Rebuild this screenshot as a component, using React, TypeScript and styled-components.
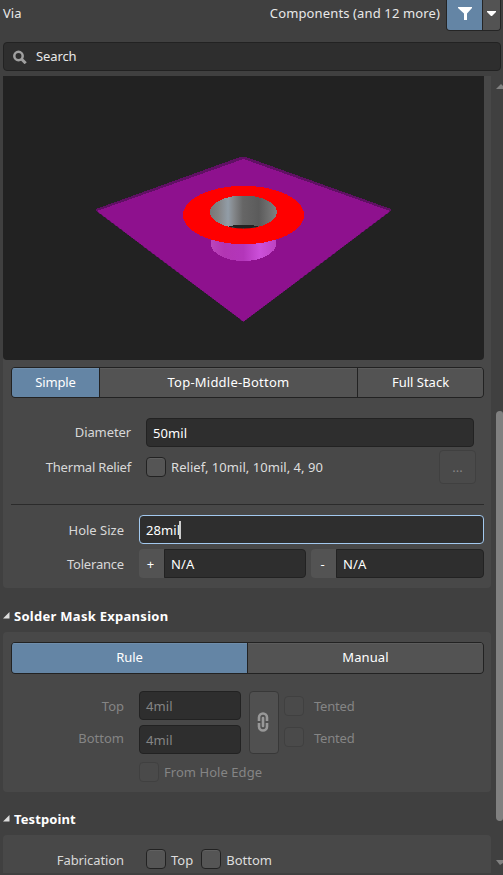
import React from "react";
import styled, { createGlobalStyle, css } from "styled-components";

const Global = createGlobalStyle`
  * { box-sizing: border-box; }
  html, body { margin: 0; background: #404040; overflow: hidden; }
  body { font: 13px/18px "Noto Sans", "Open Sans", sans-serif; color: #e8e8e8; }
`;

const Page = styled.div`
  width: 503px; height: 875px; display: flex; flex-direction: column; overflow: hidden;
`;
const Header = styled.header`
  height: 42px; flex: none; display: flex; align-items: flex-start; padding-left: 3px;
`;
const Text = styled.span<{ $ls?: number }>`
  white-space: pre; letter-spacing: ${(p) => p.$ls ?? 0}px;
`;
const HeaderText = styled(Text)<{ $push?: boolean }>`
  margin-top: 4px; margin-left: ${(p) => (p.$push ? "auto" : 0)}; margin-right: ${(p) => (p.$push ? "6px" : 0)};
`;
const FilterSplit = styled.div`
  width: 55px; height: 31px; margin-right: 2px; display: flex;
  border: 1px solid #252525; border-top: 0; border-radius: 0 0 4px 4px; overflow: hidden;
`;
const FilterButton = styled.button`
  width: 36px; padding: 0; border: 0; border-right: 1px solid #252525; background: #6485a5;
  display: flex; justify-content: center; svg { display: block; }
`;
const FilterMenu = styled(FilterButton)`
  width: 17px; border-right: 0; background: #535353;
`;
const SearchBar = styled.div`
  width: 498px; height: 29px; margin-left: 3px; flex: none; display: flex; align-items: center;
  gap: 9px; padding-left: 9px; background: #2e2e2e; border: 1px solid #222; border-radius: 4px;
  span { margin-top: -2px; }
`;
const Body = styled.div`
  flex: 1; min-height: 0; margin-top: 5px; display: flex;
`;
const Content = styled.main`
  width: 488px; margin-left: 3px; height: 797px; overflow: hidden;
`;
const Scrollbar = styled.aside`
  width: 7px; margin-left: 5px; display: flex; flex-direction: column; svg { display: block; flex: none; }
`;
const Thumb = styled.div`
  height: 410px; flex: none; margin-top: 322px; margin-bottom: 39px; background: #808080;
  border-radius: 4px 3px 3px 4px;
`;
const Panel = styled.section<{ $h: number; $first?: boolean }>`
  height: ${(p) => p.$h}px; background: #484848; display: flow-root;
  border-radius: ${(p) => (p.$first ? "0 0 4px 4px" : "4px")};
`;
const Preview = styled.div`
  width: 481px; height: 284px; background: #222; border-radius: 0 0 4px 4px;
  svg { display: block; }
`;
const Tabs = styled.div<{ $top: number; $cols: string; $h: number }>`
  display: grid; grid-template-columns: ${(p) => p.$cols}; column-gap: 1px;
  width: 473px; height: ${(p) => p.$h}px; margin: ${(p) => p.$top}px 0 0 8px;
  border: 1px solid #222; border-radius: 4px; overflow: hidden; background: #222;
`;
const Tab = styled.button<{ $on?: boolean; $ls?: number; $lift?: number }>`
  border: 0; padding: 0 0 ${(p) => p.$lift ?? 1}px; font: inherit; color: #fff;
  letter-spacing: ${(p) => p.$ls ?? 0}px;
  background: ${(p) => (p.$on ? "#6485a5" : "#535353")};
  box-shadow: inset 0 1px ${(p) => (p.$on ? "#6f8eac" : "#5c5c5c")};
`;
const Row = styled.div<{ $top: number; $h: number }>`
  display: flex; align-items: center; margin-top: ${(p) => p.$top}px; height: ${(p) => p.$h}px;
`;
const Label = styled.label<{ $w: number; $gap?: number; $dim?: boolean; $ls?: number; $shift?: number }>`
  width: ${(p) => p.$w}px; margin-right: ${(p) => p.$gap ?? 0}px; margin-top: ${(p) => p.$shift ?? 0}px;
  text-align: right; white-space: nowrap; flex: none;
  color: ${(p) => (p.$dim ? "#858585" : "#d8d8d8")}; letter-spacing: ${(p) => p.$ls ?? 0}px;
`;
const Field = styled.div<{ $w: number; $focus?: boolean; $dim?: boolean; $joined?: boolean }>`
  width: ${(p) => p.$w}px; height: 29px; display: flex; align-items: center; padding-left: 6px;
  background: #2e2e2e; border: 1px solid ${(p) => (p.$focus ? "#a3c9ef" : "#222")};
  border-radius: ${(p) => (p.$joined ? "0 4px 4px 0" : "4px")};
  color: ${(p) => (p.$dim ? "#858585" : "#fff")}; letter-spacing: 0.1px;
`;
const Caret = styled.i`
  width: 2px; height: 18px; background: #ccc; margin-left: -1px;
`;
const Sign = styled.div<{ $gap?: number }>`
  width: 25px; height: 29px; margin-left: ${(p) => p.$gap ?? 0}px; background: #535353;
  border-radius: 4px 0 0 4px; color: #fff;
  display: flex; align-items: center; justify-content: center; padding-right: 2px;
`;
const faded = css`background: #4a4a4a; border-color: #404040;`;
const Check = styled.span<{ $dim?: boolean; $gap?: number }>`
  width: 20px; height: 20px; flex: none; margin-left: ${(p) => p.$gap ?? 0}px;
  border: 1px solid #222; border-radius: 4px; background: #555;
  box-shadow: ${(p) => (p.$dim ? "none" : "inset 0 1px #606060")};
  ${(p) => p.$dim && faded}
`;
const Caption = styled(Text)<{ $gap: number; $dim?: boolean; $shift?: number }>`
  margin-left: ${(p) => p.$gap}px; margin-top: ${(p) => p.$shift ?? 0}px;
  color: ${(p) => (p.$dim ? "#858585" : "#dedede")};
`;
const MoreButton = styled.button`
  width: 37px; height: 34px; margin-left: auto; margin-right: 15px; padding: 0;
  border: 1px solid #404040; border-radius: 4px; background: #4a4a4a; color: #858585; font: inherit;
`;
const Divider = styled.hr`
  width: 473px; height: 1px; margin: 20px 0 0 8px; border: 0; background: #2b2b2b;
`;
const Heading = styled.h2<{ $h: number; $pad: number; $ls?: number }>`
  height: ${(p) => p.$h}px; margin: 0; padding-top: ${(p) => p.$pad}px;
  display: flex; align-items: center; gap: 4px;
  font-size: 13px; line-height: 18px; font-weight: 700; color: #fff; letter-spacing: ${(p) => p.$ls ?? 0}px;
  svg { display: block; margin-top: -2px; }
`;
const MaskGrid = styled.div`
  display: grid; grid-template-columns: 121px 117px 38px 1fr; grid-template-rows: 29px 29px;
  row-gap: 5px; margin-top: 17px; align-items: center;
`;
const MaskField = styled(Field)<{ $row: number }>`
  grid-column: 2; grid-row: ${(p) => p.$row}; margin-left: 15px; padding-top: 1px;
`;
const LinkButton = styled.button`
  grid-column: 3; grid-row: 1 / 3; width: 30px; height: 63px; margin-left: 8px; padding: 0 2px 2px 0;
  border: 1px solid #383838; border-radius: 4px; background: #505050;
  display: flex; align-items: center; justify-content: center;
`;
const Tented = styled.div<{ $row: number }>`
  grid-column: 4; grid-row: ${(p) => p.$row}; display: flex; align-items: center; margin-left: 5px;
  margin-top: ${(p) => (p.$row === 1 ? 1 : -5)}px;
`;

const Marker = () => (
  <svg width="7" height="7"><path d="M0 6.5L6.5 0V6.5Z" fill="#ddd" /></svg>
);

const Chain = () => (
  <svg width="12" height="20" fill="none" stroke="#989898" strokeWidth="2.6">
    <path d="M2 9V5.4A4 3.9 0 0 1 10 5.4V9M2 11V14.6A4 3.9 0 0 0 10 14.6V11" />
    <path d="M6 6V14" strokeLinecap="round" strokeWidth="2.6" />
  </svg>
);

const Via = () => (
  <svg width="481" height="284" viewBox="3 76 481 284" shapeRendering="crispEdges">
    <defs>
      <linearGradient id="bore">
        <stop offset="0" stopColor="#777" /><stop offset=".12" stopColor="#838383" />
        <stop offset=".27" stopColor="#929da7" /><stop offset=".36" stopColor="#838689" />
        <stop offset=".49" stopColor="#666" /><stop offset=".73" stopColor="#5b5b5b" />
        <stop offset=".88" stopColor="#707070" /><stop offset="1" stopColor="#808080" />
      </linearGradient>
      <linearGradient id="barrel">
        <stop offset="0" stopColor="#bb45bb" /><stop offset=".2" stopColor="#b235b3" />
        <stop offset=".5" stopColor="#b336ba" /><stop offset=".75" stopColor="#cc50da" />
        <stop offset="1" stopColor="#bd43c1" />
      </linearGradient>
      <clipPath id="hole"><ellipse cx="243.5" cy="212" rx="33.5" ry="16.5" /></clipPath>
    </defs>
    <path d="M96 209L240 157H246L391 209V211L243.5 322L96 211Z" fill="#601064" />
    <path d="M97 211L243.5 159L390 211L243.5 321.5Z" fill="#8e118e" />
    <path d="M211 235V244A32.5 17 0 0 0 276 244V235Z" fill="url(#barrel)" />
    <ellipse cx="243.5" cy="215" rx="60.5" ry="29.2" fill="red" />
    <ellipse cx="243.5" cy="212" rx="33.5" ry="16.5" fill="url(#bore)" />
    <path d="M227 227L235 225H252L260 227V230H227Z" fill="#222" clipPath="url(#hole)" />
  </svg>
);

export default function App() {
  return (
    <Page>
      <Global />
      <Header>
        <HeaderText>Via</HeaderText>
        <HeaderText $push $ls={0.13}>Components (and 12 more)</HeaderText>
        <FilterSplit>
          <FilterButton>
            <svg width="16" height="24"><path d="M1 7H15V8L10 13.5V20H7V13.5L1 8Z" fill="#fff" /></svg>
          </FilterButton>
          <FilterMenu>
            <svg width="9" height="20"><path d="M0 11H9V12L5 16H4L0 12Z" fill="#fff" /></svg>
          </FilterMenu>
        </FilterSplit>
      </Header>
      <SearchBar>
        <svg width="14" height="14" fill="none" stroke="#a0a0a0">
          <circle cx="5.5" cy="6" r="4.2" strokeWidth="2.5" />
          <path d="M8.7 9.2L12.7 13.2" strokeWidth="3" />
        </svg>
        <Text $ls={-0.1}>Search</Text>
      </SearchBar>
      <Body>
        <Content>
          <Panel $h={512} $first>
            <Preview><Via /></Preview>
            <Tabs $top={7} $h={31} $cols="87px 257px 1fr">
              <Tab $on $ls={-0.15}>Simple</Tab><Tab $ls={0.22}>Top-Middle-Bottom</Tab><Tab>Full Stack</Tab>
            </Tabs>
            <Row $top={20} $h={29}>
              <Label $w={128} $gap={15} $shift={-2} $ls={-0.1}>Diameter</Label>
              <Field $w={328}>50mil</Field>
            </Row>
            <Row $top={3} $h={34}>
              <Label $w={128} $gap={15} $ls={-0.2}>Thermal Relief</Label>
              <Check /><Caption $gap={5} $ls={0.04}>Relief, 10mil, 10mil, 4, 90</Caption>
              <MoreButton>...</MoreButton>
            </Row>
            <Divider />
            <Row $top={10} $h={29}>
              <Label $w={121} $gap={15}>Hole Size</Label>
              <Field $w={345} $focus>28mil<Caret /></Field>
            </Row>
            <Row $top={5} $h={29}>
              <Label $w={121} $gap={15} $ls={-0.2}>Tolerance</Label>
              <Sign>+</Sign><Field $w={142} $joined>N/A</Field>
              <Sign $gap={5}>-</Sign><Field $w={148} $joined>N/A</Field>
            </Row>
          </Panel>
          <Heading $h={44} $pad={12} $ls={0.28}><Marker /><span>Solder Mask Expansion</span></Heading>
          <Panel $h={160}>
            <Tabs $top={10} $h={32} $cols="235px 1fr">
              <Tab $on $ls={-0.1} $lift={3}>Rule</Tab><Tab $ls={0.1} $lift={3}>Manual</Tab>
            </Tabs>
            <MaskGrid>
              <Label $w={121} $dim $shift={1}>Top</Label>
              <MaskField $w={102} $row={1} $dim>4mil</MaskField>
              <Label $w={121} $dim $shift={-3}>Bottom</Label>
              <MaskField $w={102} $row={2} $dim>4mil</MaskField>
              <LinkButton><Chain /></LinkButton>
              <Tented $row={1}><Check $dim /><Caption $gap={10} $dim $ls={-0.2}>Tented</Caption></Tented>
              <Tented $row={2}>
                <Check $dim /><Caption $gap={10} $shift={2} $dim $ls={-0.2}>Tented</Caption>
              </Tented>
            </MaskGrid>
            <Row $top={8} $h={20}>
              <Check $dim $gap={136} /><Caption $gap={5} $dim $ls={0.05}>From Hole Edge</Caption>
            </Row>
          </Panel>
          <Heading $h={43} $pad={11} $ls={0.1}><Marker /><span>Testpoint</span></Heading>
          <Panel $h={60}>
            <Row $top={0} $h={48}>
              <Label $w={121} $gap={22} $shift={2} $ls={-0.1}>Fabrication</Label>
              <Check /><Caption $gap={5} $shift={2}>Top</Caption>
              <Check $gap={8} /><Caption $gap={5} $shift={2}>Bottom</Caption>
            </Row>
          </Panel>
        </Content>
        <Scrollbar>
          <svg width="7" height="13"><path d="M0 13L5 8L7 10V13Z" fill="#808080" /></svg>
          <Thumb />
          <svg width="7" height="6"><path d="M0 0H7V3L4 5Z" fill="#808080" /></svg>
        </Scrollbar>
      </Body>
    </Page>
  );
}
